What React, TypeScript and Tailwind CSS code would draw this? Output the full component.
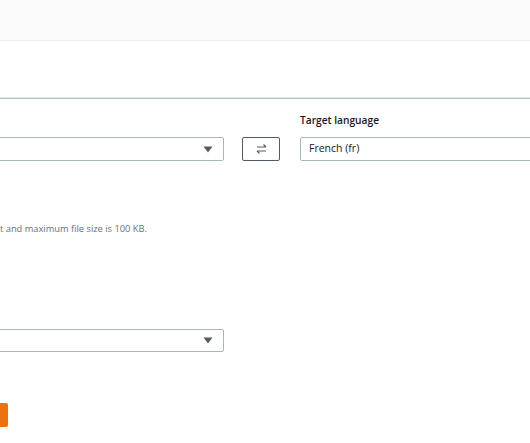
import React from "react";

function Caret() {
  return (
    <svg width="10" height="7" viewBox="0 0 10 7" className="shrink-0">
      <path d="M0.5 0.5 L9.5 0.5 L5 6.5 Z" fill="#545b64" />
    </svg>
  );
}

function SwapIcon() {
  return (
    <svg width="11" height="10" viewBox="0 0 11 10" fill="none" stroke="#545b64" strokeWidth="1.1">
      <path d="M1 3 H10 M7.5 0.5 L10 3" />
      <path d="M10 7 H1 M3.5 9.5 L1 7" />
    </svg>
  );
}

export default function App() {
  return (
    <div
      className="w-[530px] h-[443px] overflow-hidden bg-white text-[#16191f]"
      style={{ fontFamily: '"Open Sans", "Noto Sans", Arial, sans-serif' }}
    >
      {/* Top bar */}
      <div className="h-[41px] bg-[#fafafa] border-b border-[#eaeded]" />

      <div className="h-[56px]" />
      <div className="h-[2px] border-t border-[#e1e6e6] border-b border-b-[#b9c4c5]" />

      <div className="-ml-[300px] w-[1200px]">
        {/* Language row */}
        <div className="flex items-end pt-[13px]">
          <div className="w-[524px] shrink-0">
            <div className="h-[16px] mb-[9px]" />
            <div className="h-[24px] border border-[#aab7b8] rounded-[2px] flex items-center justify-end pr-[10px]">
              <Caret />
            </div>
          </div>
          <button className="shrink-0 ml-[18px] w-[38px] h-[24px] border border-[#545b64] rounded-[2px] flex items-center justify-center">
            <SwapIcon />
          </button>
          <div className="shrink-0 ml-[20px] w-[300px]">
            <div className="h-[16px] mb-[9px] text-[10.2px] leading-[16px] font-semibold text-[#16191f]">
              Target language
            </div>
            <div className="h-[24px] border border-[#aab7b8] rounded-[2px] flex items-center pl-[8px] text-[10.5px]">
              French (fr)
            </div>
          </div>
        </div>

        {/* Upload hint */}
        <div className="pl-[300px] mt-[61px] text-[9.3px] leading-[14px] text-[#687078]">
          t and maximum file size is 100 KB.
        </div>

        {/* Second select */}
        <div className="mt-[93px] w-[524px] h-[23px] border border-[#aab7b8] rounded-[2px] flex items-center justify-end pr-[10px]">
          <Caret />
        </div>

        {/* Action button */}
        <div className="mt-[51px] flex">
          <button className="ml-[200px] w-[108px] h-[24px] bg-[#ec7211] rounded-[2px]" />
        </div>
      </div>
    </div>
  );
}
